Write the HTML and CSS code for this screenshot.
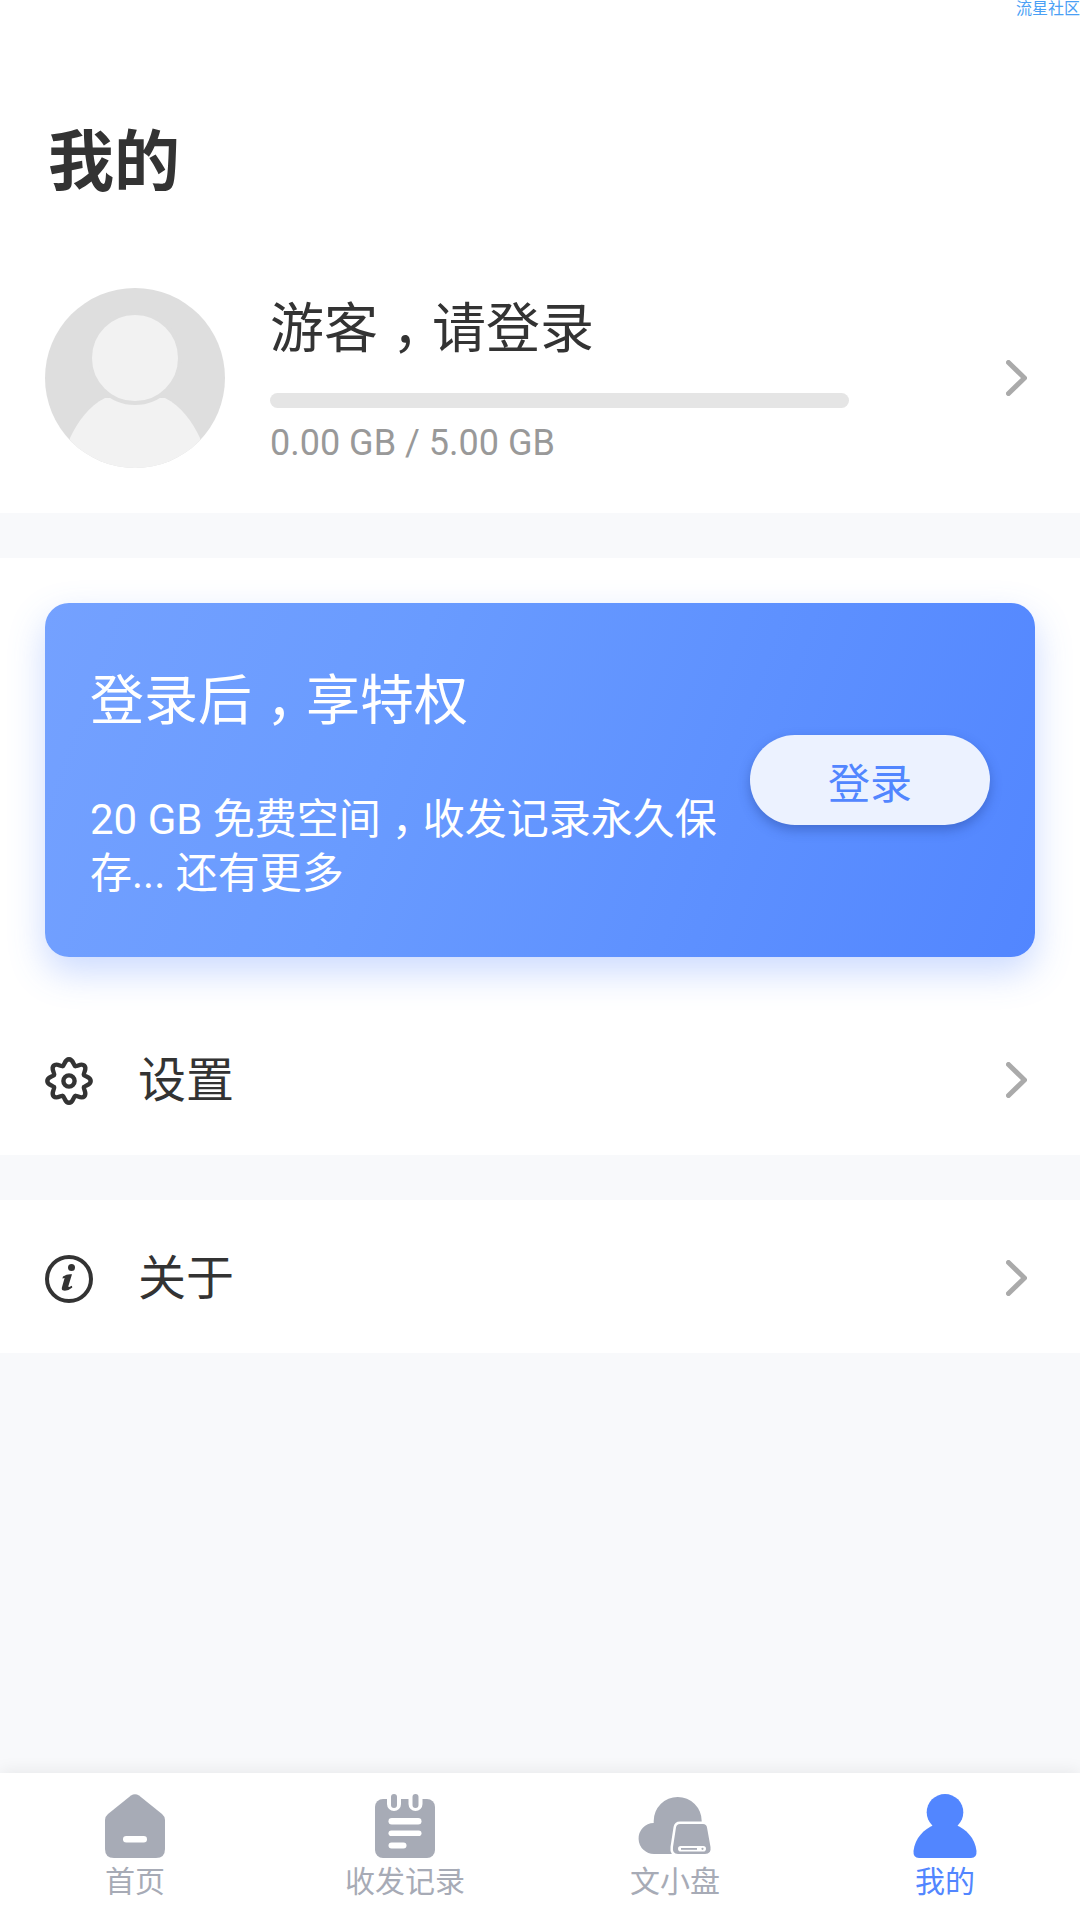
FILE: index.html
```html
<!DOCTYPE html>
<html lang="zh-CN">

<head>
    <meta charset="UTF-8">
    <meta name="viewport" content="width=device-width, initial-scale=1.0">
    <title>我的</title>
    <link rel="stylesheet" href="styles.css">
</head>

<body>
    <div class="watermark">流星社区</div>
    <div class="page">
        <main class="content">
            <section class="profile">
                <h1 class="page-title">我的</h1>
                <div class="user-row">
                    <svg class="avatar" viewBox="0 0 180 180">
                        <defs>
                            <clipPath id="avatarClip"><circle cx="90" cy="90" r="90"/></clipPath>
                        </defs>
                        <circle cx="90" cy="90" r="90" fill="#dedede"/>
                        <path clip-path="url(#avatarClip)" fill="#f2f2f2" d="M20 180 L25 150 C33 133 44 118 60 110 H120 C136 118 147 133 155 150 L160 180 Z"/>
                        <circle cx="90" cy="70" r="45" fill="#f2f2f2" stroke="#dedede" stroke-width="4"/>
                    </svg>
                    <div class="user-info">
                        <div class="user-name">游客<span class="comma">，</span>请登录</div>
                        <div class="storage-bar"></div>
                        <div class="storage-text">0.00 GB / 5.00 GB</div>
                    </div>
                    <svg class="chevron" viewBox="0 0 21 36"><path d="M2.5 2.5 L18.5 18 L2.5 33.5"/></svg>
                </div>
            </section>

            <section class="promo-section">
                <div class="promo-card">
                    <div class="promo-text">
                        <div class="promo-title">登录后<span class="comma">，</span>享特权</div>
                        <div class="promo-desc">20 GB 免费空间<span class="comma">，</span>收发记录永久保<br>存... 还有更多</div>
                    </div>
                    <button class="login-btn">登录</button>
                </div>
                <div class="menu-row">
                    <svg class="menu-icon" viewBox="0 0 48 48">
                        <g fill="none" stroke="#333" stroke-width="4.4" stroke-linecap="round" transform="translate(24 24)">
                            <path id="lobe" d="M-6.2 -14.97 C-4.17 -15.8 -4.4 -21.7 0 -21.7 C4.4 -21.7 4.17 -15.8 6.2 -14.97"/>
                            <use href="#lobe" transform="rotate(45)"/>
                            <use href="#lobe" transform="rotate(90)"/>
                            <use href="#lobe" transform="rotate(135)"/>
                            <use href="#lobe" transform="rotate(180)"/>
                            <use href="#lobe" transform="rotate(225)"/>
                            <use href="#lobe" transform="rotate(270)"/>
                            <use href="#lobe" transform="rotate(315)"/>
                            <circle r="5.6"/>
                        </g>
                    </svg>
                    <span class="menu-label">设置</span>
                    <svg class="chevron" viewBox="0 0 21 36"><path d="M2.5 2.5 L18.5 18 L2.5 33.5"/></svg>
                </div>
            </section>

            <section class="about-section">
                <div class="menu-row">
                    <svg class="menu-icon" viewBox="0 0 48 48">
                        <circle cx="24" cy="24" r="22" fill="none" stroke="#333" stroke-width="4"/>
                        <circle cx="26.5" cy="12.5" r="3.5" fill="#333"/>
                        <path fill="#333" d="M18 21.5 q4.5-3 9-2.2 l-3.6 11.7 q-.3 1.2.8 1 l2.7-1.2 .4 1.6 q-4.4 3.8-8.6 3.2 q-2.4-.5-1.8-3.2 l2.7-9.5 -2.2 .5z"/>
                    </svg>
                    <span class="menu-label">关于</span>
                    <svg class="chevron" viewBox="0 0 21 36"><path d="M2.5 2.5 L18.5 18 L2.5 33.5"/></svg>
                </div>
            </section>
        </main>

        <nav class="tabbar">
            <div class="tab">
                <svg class="tab-icon" width="60" height="64" viewBox="0 0 60 64">
                    <path fill="#a7abb6" d="M26 1.5 Q30 -1 34 1.5 L57 20 Q60 22.5 60 26 V55 Q60 64 51 64 H9 Q0 64 0 55 V26 Q0 22.5 3 20 Z"/>
                    <rect x="18" y="42" width="24" height="6.6" rx="3.3" fill="#fff"/>
                </svg>
                <span>首页</span>
            </div>
            <div class="tab">
                <svg class="tab-icon" width="60" height="64" viewBox="0 0 60 64">
                    <rect y="5" width="60" height="59" rx="8" fill="#a7abb6"/>
                    <rect x="12" y="-4" width="14" height="21" rx="7" fill="#fff"/>
                    <rect x="33.5" y="-4" width="14" height="21" rx="7" fill="#fff"/>
                    <rect x="16" y="0" width="6" height="14" rx="3" fill="#a7abb6"/>
                    <rect x="37.5" y="0" width="6" height="14" rx="3" fill="#a7abb6"/>
                    <rect x="13.5" y="24" width="33" height="6.6" rx="3.3" fill="#fff"/>
                    <rect x="13.5" y="36.5" width="33" height="5.6" rx="2.8" fill="#fff"/>
                    <rect x="13.5" y="48.5" width="18" height="6" rx="3" fill="#fff"/>
                </svg>
                <span>收发记录</span>
            </div>
            <div class="tab">
                <svg class="tab-icon" width="72" height="64" viewBox="0 0 72 64">
                    <path fill="#a7abb6" d="M15.5 60 A15.5 15.5 0 0 1 14.7 29 V27 A24 24 0 0 1 62.7 27 V60 Z"/>
                    <path fill="#a7abb6" stroke="#fff" stroke-width="5" paint-order="stroke" d="M41 30 H64 Q67.5 30 68 33.5 L71.5 53 Q72.5 60 66 60 H39 Q33 60 34 53 L37 33.5 Q37.5 30 41 30 Z"/>
                    <rect x="39" y="52" width="28" height="5.6" rx="2.8" fill="#fff"/>
                    <rect x="42" y="54" width="16" height="1.8" fill="#a7abb6"/>
                    <circle cx="63.5" cy="54.8" r="1.1" fill="#a7abb6"/>
                </svg>
                <span>文小盘</span>
            </div>
            <div class="tab active">
                <svg class="tab-icon" width="64" height="64" viewBox="0 0 64 64">
                    <circle cx="32" cy="18.3" r="18.3" fill="#5286ff"/>
                    <path fill="#5286ff" d="M6 64 H58 Q64 64 63.5 57 C62 44 53 35 43 31 L21 31 C11 35 2 44 .5 57 Q0 64 6 64 Z"/>
                </svg>
                <span>我的</span>
            </div>
        </nav>
    </div>
</body>

</html>
```
FILE: styles.css
```css
* {
    box-sizing: border-box;
}

body {
    font-family: Roboto, 'Noto Sans CJK SC', sans-serif;
    background-color: #f8f9fb;
    margin: 0;
    padding: 0;
    color: #333;
}

.page {
    display: flex;
    flex-direction: column;
    height: 1920px;
}

.content {
    flex: 1;
}

.watermark {
    position: absolute;
    top: -3px;
    right: 0;
    font-size: 16px;
    line-height: 24px;
    color: #4a9ff5;
}

.profile {
    height: 513px;
    padding: 123px 45px 0;
    background-color: white;
}

.page-title {
    margin: 0 0 85px 3px;
    height: 80px;
    font-size: 66px;
    line-height: 80px;
    font-weight: 700;
    color: #333;
}

.user-row {
    display: flex;
    align-items: center;
    height: 180px;
}

.avatar {
    width: 180px;
    height: 180px;
    flex-shrink: 0;
    margin-right: 45px;
}

.user-info {
    flex: 1;
}

.user-name {
    font-size: 54px;
    line-height: 76px;
    color: #333;
    margin-bottom: 25px;
}

/* the TC comma is centred in its cell, the device draws it low and centred */
.comma {
    font-family: 'Noto Sans CJK TC', sans-serif;
    display: inline-block;
    line-height: 1;
    transform: translateY(0.3em);
}

.storage-bar {
    width: 579px;
    height: 15px;
    background-color: #e5e5e5;
    border-radius: 8px;
}

.storage-text {
    margin-top: 14px;
    font-size: 36px;
    line-height: 42px;
    color: #999;
}

.chevron {
    width: 21px;
    height: 36px;
    flex-shrink: 0;
    margin-right: 8px;
}

.chevron path {
    fill: none;
    stroke: #aaa;
    stroke-width: 5;
    stroke-linecap: round;
    stroke-linejoin: round;
}

.promo-section {
    margin-top: 45px;
    padding-top: 45px;
    background-color: white;
}

.promo-card {
    display: flex;
    align-items: center;
    height: 354px;
    margin: 0 45px;
    padding: 0 45px;
    border-radius: 24px;
    background: linear-gradient(110deg, #74a1ff 0%, #699bff 35%, #5286ff 100%);
    box-shadow: 0 15px 36px rgba(82, 134, 255, 0.3);
}

.promo-text {
    flex: 1;
    margin-right: 16px;
    color: white;
}

.promo-title {
    font-size: 54px;
    line-height: 86px;
}

.promo-desc {
    margin-top: 48px;
    font-size: 42px;
    line-height: 54px;
}

.login-btn {
    width: 240px;
    height: 90px;
    flex-shrink: 0;
    padding: 0;
    border: none;
    border-radius: 45px;
    background-color: #ecf2ff;
    box-shadow: 0 5px 12px rgba(30, 60, 140, 0.4);
    color: #5286ff;
    font-family: inherit;
    font-size: 42px;
}

.menu-row {
    display: flex;
    align-items: center;
    height: 153px;
    padding: 3px 45px 0;
}

.promo-section .menu-row {
    margin-top: 45px;
}

.menu-icon {
    width: 48px;
    height: 48px;
    flex-shrink: 0;
    margin-top: 2px;
    margin-right: 45px;
}

.menu-label {
    flex: 1;
    font-size: 48px;
    line-height: 60px;
    margin-top: 2px;
    color: #333;
}

.about-section {
    margin-top: 45px;
    background-color: white;
}

.tabbar {
    display: flex;
    height: 147px;
    background-color: white;
    box-shadow: 0 -2px 16px rgba(0, 0, 0, 0.07);
}

.tab {
    flex: 1;
    display: flex;
    flex-direction: column;
    align-items: center;
    padding-top: 21px;
    font-size: 30px;
    line-height: 42px;
    color: #a7abb6;
}

.tab span {
    margin-top: 3px;
}

.tab-icon {
    display: block;
    overflow: visible;
}

.tab.active {
    color: #5286ff;
}
```
